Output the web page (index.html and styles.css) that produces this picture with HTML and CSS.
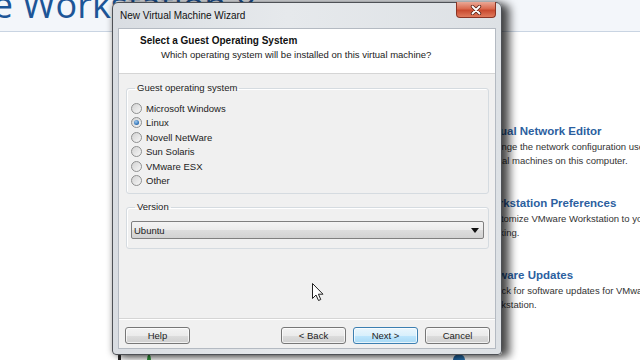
FILE: index.html
```html
<!DOCTYPE html>
<html lang="en">
<head>
  <meta charset="UTF-8">
  <title>New Virtual Machine Wizard</title>
  <link rel="stylesheet" href="styles.css">
</head>
<body>

  <div class="desktop">
    <div class="banner"><span class="brand">re Workstation 8</span></div>

    <div class="home">
      <ul class="tasks">
        <li>
          <h3>Virtual Network Editor</h3>
          <p>Change the network configuration used by<br>virtual machines on this computer.</p>
        </li>
        <li>
          <h3>Workstation Preferences</h3>
          <p>Customize VMware Workstation to your<br>working.</p>
        </li>
        <li>
          <h3>VMware Updates</h3>
          <p>Check for software updates for VMware<br>Workstation.</p>
        </li>
      </ul>

      <div class="tiles">
        <span class="tile-icon dark"></span>
        <span class="tile-icon green"></span>
        <span class="tile-text">Create a virtual machine for a new operating system</span>
        <span class="tile-icon blue"></span>
        <span class="tile-text">Find the latest news for VMware</span>
      </div>
    </div>

    <!-- wizard window sits over the home page -->
    <div class="wizard">
      <div class="titlebar">
        <span class="caption">New Virtual Machine Wizard</span>
        <span class="close">
          <svg width="12" height="10" viewBox="0 0 12 10">
            <path d="M2.5 1.5 L9.5 8.5 M9.5 1.5 L2.5 8.5" stroke="#5a2418" stroke-width="3.4" stroke-linecap="round"/>
            <path d="M2.5 1.5 L9.5 8.5 M9.5 1.5 L2.5 8.5" stroke="#fff" stroke-width="1.8" stroke-linecap="round"/>
          </svg>
        </span>
      </div>

      <div class="client">
        <div class="head">
          <div class="head-title">Select a Guest Operating System</div>
          <div class="head-sub">Which operating system will be installed on this virtual machine?</div>
        </div>

        <div class="body">
          <fieldset class="group">
            <legend>Guest operating system</legend>
            <label class="radio"><span class="dot"></span>Microsoft Windows</label>
            <label class="radio"><span class="dot checked"></span>Linux</label>
            <label class="radio"><span class="dot"></span>Novell NetWare</label>
            <label class="radio"><span class="dot"></span>Sun Solaris</label>
            <label class="radio"><span class="dot"></span>VMware ESX</label>
            <label class="radio"><span class="dot"></span>Other</label>
          </fieldset>

          <fieldset class="group version">
            <legend>Version</legend>
            <div class="combo">
              <span>Ubuntu</span>
              <svg width="8" height="5" viewBox="0 0 8 5"><path d="M0 0 H8 L4 5 Z" fill="#111"/></svg>
            </div>
          </fieldset>
        </div>

        <div class="footer">
          <button class="btn">Help</button>
          <div class="nav">
            <button class="btn">&lt; Back</button>
            <button class="btn primary">Next &gt;</button>
            <button class="btn">Cancel</button>
          </div>
        </div>
      </div>
    </div>

    <svg class="cursor" width="12" height="19" viewBox="0 0 12 19">
      <path d="M0.5 0.5 V15.5 L4 12 L6.5 17.5 L8.8 16.5 L6.4 11.2 H11 Z" fill="#fff" stroke="#222" stroke-width="1"/>
    </svg>
  </div>

</body>
</html>
```

FILE: styles.css
```css
body {
  margin: 0;
  padding: 0;
  font-family: 'Liberation Sans', Arial, sans-serif;
  background: #fff;
  color: #222;
}

.desktop {
  position: relative;
  width: 640px;
  height: 360px;
  overflow: hidden;
  background: #fff;
}

/* ---------- home page behind the dialog ---------- */

.banner {
  height: 31px;
  background: #f3f6fa;
  border-bottom: 1px solid #c9d4e2;
  overflow: hidden;
}

.brand {
  display: block;
  margin: -13px 0 0 -22px;
  font-family: 'Open Sans', sans-serif;
  font-size: 36px;
  line-height: 36px;
  color: #1d5597;
  white-space: nowrap;
}

.home {
  padding-top: 92px;
}

.tasks {
  list-style: none;
  margin: 0 0 0 481px;
  padding: 0;
  white-space: nowrap;
}

.tasks li + li {
  margin-top: 28px;
}

.tasks h3 {
  margin: 0;
  font-size: 11.5px;
  line-height: 14px;
  color: #2c5f9f;
}

.tasks p {
  margin: 2px 0 0 3px;
  font-size: 9.5px;
  line-height: 14px;
  color: #333;
}

.tiles {
  display: flex;
  align-items: flex-start;
  margin-top: 42px;
  padding-left: 118px;
  white-space: nowrap;
}

.tile-icon {
  display: block;
  border-radius: 50%;
}

.tile-icon.dark {
  width: 10px;
  height: 14px;
  border-radius: 2px;
  background: #2a2a2a;
}

.tile-icon.green {
  width: 16px;
  height: 16px;
  margin-left: 26px;
  background: #2f9a3c;
}

.tile-icon.blue {
  width: 44px;
  height: 20px;
  margin-left: 30px;
  border-radius: 10px;
  background: linear-gradient(90deg, #1c5f9c, #2c7ab8);
}

.tile-text {
  margin: 4px 0 0 18px;
  font-size: 11px;
  color: #333;
}

/* ---------- wizard window ---------- */

.wizard {
  position: absolute;
  left: 112px;
  top: 2px;
  width: 390px;
  height: 353px;
  box-sizing: border-box;
  display: flex;
  flex-direction: column;
  border: 1px solid #4e5156;
  border-radius: 6px 6px 4px 4px;
  background: linear-gradient(90deg, #d9dde2 0%, #e6e9ec 45%, #dde1e5 100%);
  box-shadow: 0 0 6px rgba(0, 0, 0, 0.35), 8px 2px 9px rgba(0, 0, 0, 0.65);
}

.titlebar {
  height: 25px;
  display: flex;
  justify-content: space-between;
  align-items: flex-start;
  padding: 0 5px 0 7px;
}

.caption {
  font-size: 10px;
  line-height: 25px;
  color: #111;
}

.close {
  display: flex;
  align-items: center;
  justify-content: center;
  width: 40px;
  height: 16px;
  margin-top: -1px;
  border: 1px solid #8a3424;
  border-top: none;
  border-radius: 0 0 4px 4px;
  background: linear-gradient(#eaa896 0%, #da6a4f 45%, #c94a2f 55%, #e07a5c 100%);
  box-sizing: border-box;
}

.client {
  flex: 1;
  display: flex;
  flex-direction: column;
  margin: 0 5px 5px;
  border: 1px solid #b4bac2;
  background: #f0f0f0;
  font-size: 9.5px;
}

.head {
  height: 45px;
  box-sizing: border-box;
  padding-top: 5px;
  background: #fff;
  border-bottom: 1px solid #d5d5d5;
  line-height: 14px;
}

.head-title {
  padding-left: 21px;
  font-size: 10px;
  font-weight: bold;
  color: #111;
}

.head-sub {
  padding-left: 42px;
  color: #222;
}

.body {
  flex: 1;
  padding: 0 6px 0 7px;
}

.group {
  margin: 8px 0 0;
  padding: 7px 4px 5px;
  border: 1px solid #d5dbe0;
  border-radius: 3px;
  box-shadow: inset 1px 1px 0 #fff;
}

.group legend {
  margin-left: 4px;
  padding: 0 2px;
  line-height: 12px;
  color: #222;
}

.group.version {
  margin-top: 7px;
  padding: 8px 4px 9px;
}

.radio {
  display: flex;
  align-items: center;
  height: 14.5px;
}

.dot {
  position: relative;
  width: 11px;
  height: 11px;
  margin-right: 4px;
  box-sizing: border-box;
  border: 1px solid #8f9090;
  border-radius: 50%;
  background: linear-gradient(135deg, #d2d2d2, #f7f7f7);
}

.dot.checked::after {
  content: "";
  position: absolute;
  left: 2px;
  top: 2px;
  width: 5px;
  height: 5px;
  border-radius: 50%;
  background: radial-gradient(circle at 40% 35%, #9fcaf0, #2a6db3 70%, #174f8f);
}

.combo {
  display: flex;
  align-items: center;
  justify-content: space-between;
  height: 18px;
  box-sizing: border-box;
  padding: 0 4px 0 2px;
  border: 1px solid #7f7f7f;
  border-radius: 2px;
  background: linear-gradient(#f4f4f4 0%, #ebebeb 50%, #dddddd 51%, #d2d2d2 100%);
}

.footer {
  height: 30px;
  box-sizing: border-box;
  display: flex;
  justify-content: space-between;
  align-items: flex-start;
  padding: 8px 5px 0 6px;
  border-top: 1px solid #d5d5d5;
  box-shadow: inset 0 1px 0 #fff;
}

.nav {
  display: flex;
  gap: 7px;
}

.btn {
  width: 65px;
  height: 17px;
  padding: 0;
  font-family: 'Liberation Sans', Arial, sans-serif;
  font-size: 9.5px;
  color: #222;
  border: 1px solid #777;
  border-radius: 3px;
  background: linear-gradient(#f3f3f3 0%, #ebebeb 50%, #dddddd 51%, #cfcfcf 100%);
  box-shadow: inset 0 0 0 1px rgba(255, 255, 255, 0.7);
}

.btn.primary {
  border-color: #3c7fb1;
  background: linear-gradient(#eaf6fd 0%, #d9f0fc 50%, #bee6fd 51%, #a7d9f5 100%);
}

.cursor {
  position: absolute;
  left: 312px;
  top: 283px;
}
```
